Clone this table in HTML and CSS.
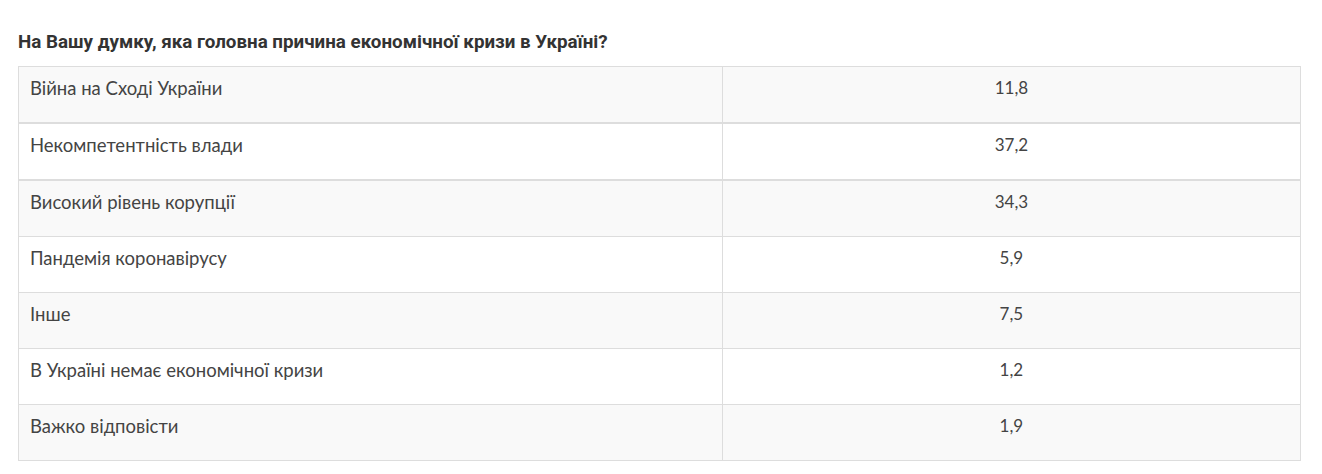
FILE: index.html
```html
<!DOCTYPE html>
<html lang="uk">
<head>
<meta charset="utf-8">
<title>Опитування</title>
<link rel="stylesheet" href="styles.css">
</head>
<body>
<div class="page">
  <h3 class="question">На Вашу думку, яка головна причина економічної кризи в Україні?</h3>
  <table class="results">
    <tbody>
      <tr class="thick"><td class="label">Війна на Сході України</td><td class="value">11,8</td></tr>
      <tr class="thick"><td class="label">Некомпетентність влади</td><td class="value">37,2</td></tr>
      <tr><td class="label">Високий рівень корупції</td><td class="value">34,3</td></tr>
      <tr><td class="label">Пандемія коронавірусу</td><td class="value">5,9</td></tr>
      <tr><td class="label">Інше</td><td class="value">7,5</td></tr>
      <tr><td class="label">В Україні немає економічної кризи</td><td class="value">1,2</td></tr>
      <tr><td class="label">Важко відповісти</td><td class="value">1,9</td></tr>
    </tbody>
  </table>
</div>
</body>
</html>
```
FILE: styles.css
```css
html, body {
  margin: 0;
  padding: 0;
  background: #ffffff;
}
.page {
  padding: 0 21px 0 18px;
}
.question {
  margin: 0;
  padding-top: 31px;
  padding-bottom: 13px;
  font-family: Roboto, "Liberation Sans", sans-serif;
  font-weight: 700;
  font-size: 18.8px;
  line-height: 22px;
  color: #333333;
}
.results {
  width: 100%;
  border-collapse: collapse;
  border: 1px solid #dddddd;
  font-family: Lato, "Open Sans", sans-serif;
  font-size: 18.5px;
  color: #444444;
}
.results td {
  border: 1px solid #dddddd;
  padding: 9px 11px 22px;
  line-height: 24px;
  vertical-align: top;
}
.results tr:nth-child(odd) td {
  background: #f9f9f9;
}
.results tr.thick td {
  border-bottom-width: 2px;
}
.results .label {
  width: 54.9%;
  text-align: left;
}
.results .value {
  text-align: center;
  font-size: 17px;
}
```
